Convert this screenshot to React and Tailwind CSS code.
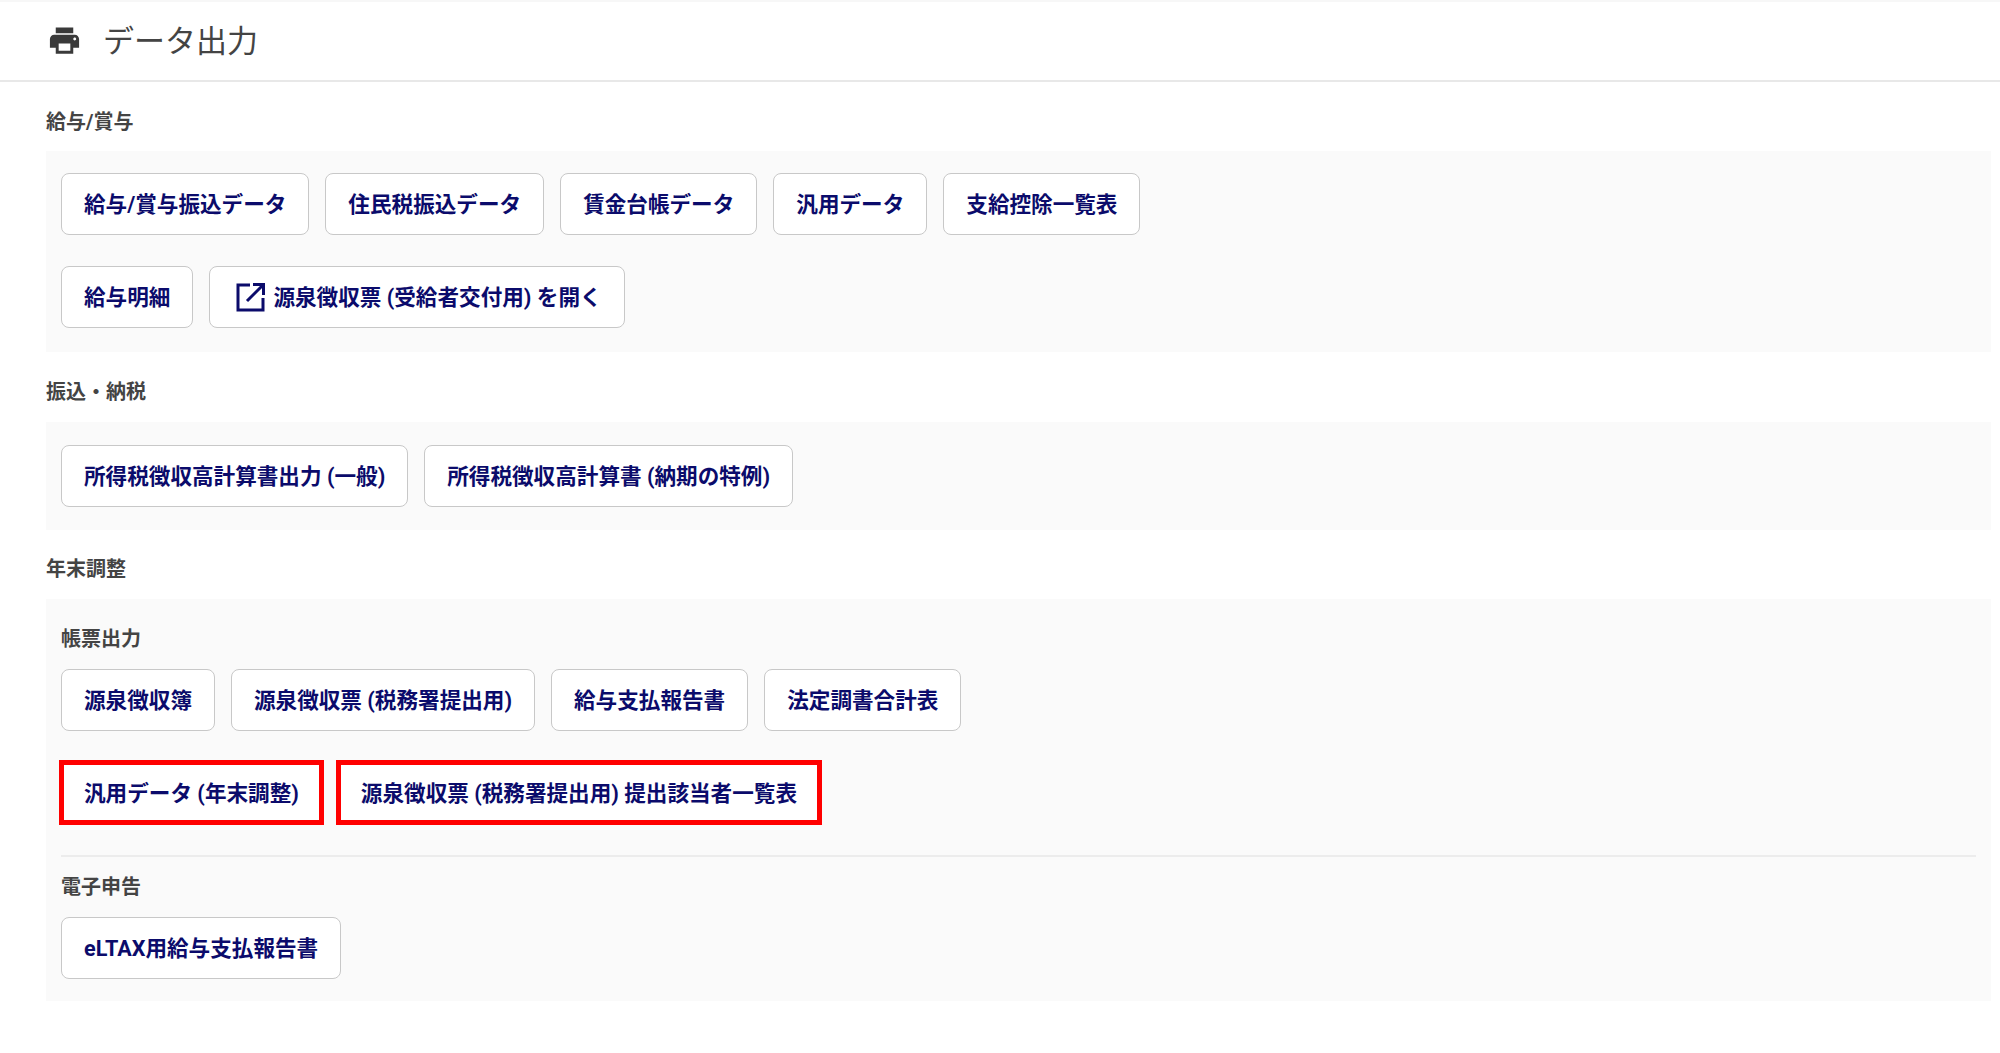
const font = { fontFamily: 'Roboto, "Noto Sans CJK JP", "Noto Sans", sans-serif' };

function Btn({ children, icon, red }) {
  return (
    <div className={red
      ? "h-[65px] -mt-[2px] -mx-[2px] px-[20px] pt-[2px] flex items-center bg-white border-[5px] border-[#ff0000] text-[21.6px] font-bold text-[#0b0b6b] whitespace-nowrap"
      : "h-[62px] px-[22px] flex items-center gap-[6px] bg-white border border-[#c8c8c8] rounded-[8px] text-[21.6px] font-bold text-[#0b0b6b] whitespace-nowrap"}>
      {icon && (
        <svg className="ml-[3px]" width="32" height="32" viewBox="0 0 32 32" fill="none" stroke="#0b0b6b" strokeWidth="3">
          <path d="M15 4H3v25h25V17" />
          <path d="M12 20L27 5M18 3.500h10.500V14" />
        </svg>
      )}
      <span className="pt-[2px]">{children}</span>
    </div>
  );
}

function Label({ children, className }) {
  return <div className={"text-[20px] leading-[28px] font-bold text-[#444444] " + className}>{children}</div>;
}

export default function App() {
  return (
    <div style={font} className="w-[2000px] h-[1053px] bg-white overflow-hidden">
      <div className="h-[82px] pb-[2px] border-b-2 border-[#e8e8e8] border-t-2 border-t-[#f7f7f7] flex items-center pl-[47px]">
        <svg width="35" height="35" viewBox="0 0 24 24" fill="#3a3a3a">
          <path d="M19 8H5c-1.660 0-3 1.340-3 3v6h4v4h12v-4h4v-6c0-1.660-1.340-3-3-3zm-3 11H8v-5h8v5zm3-7c-.550 0-1-.450-1-1s.450-1 1-1 1 .450 1 1-.450 1-1 1zm-1-9H6v4h12V3z" />
        </svg>
        <div className="ml-[21px] pt-[4px] text-[31px] text-[#444444]">データ出力</div>
      </div>

      <div className="pl-[46px] pr-[9px]">
        <Label className="mt-[26px] mb-[15px]">給与/賞与</Label>
        <div className="bg-[#fafafa] h-[201px] px-[15px] pt-[22px] flex flex-col gap-[31px]">
          <div className="flex gap-[16px]">
            <Btn>給与/賞与振込データ</Btn>
            <Btn>住民税振込データ</Btn>
            <Btn>賃金台帳データ</Btn>
            <Btn>汎用データ</Btn>
            <Btn>支給控除一覧表</Btn>
          </div>
          <div className="flex gap-[16px]">
            <Btn>給与明細</Btn>
            <Btn icon>源泉徴収票 (受給者交付用) を開く</Btn>
          </div>
        </div>

        <Label className="mt-[26px] mb-[16px]">振込・納税</Label>
        <div className="bg-[#fafafa] h-[108px] px-[15px] pt-[23px] flex gap-[16px]">
          <Btn>所得税徴収高計算書出力 (一般)</Btn>
          <Btn>所得税徴収高計算書 (納期の特例)</Btn>
        </div>

        <Label className="mt-[25px] mb-[16px]">年末調整</Label>
        <div className="bg-[#fafafa] h-[402px] px-[15px] pt-[26px]">
          <Label className="mb-[16px]">帳票出力</Label>
          <div className="flex flex-col gap-[31px]">
            <div className="flex gap-[16px]">
              <Btn>源泉徴収簿</Btn>
              <Btn>源泉徴収票 (税務署提出用)</Btn>
              <Btn>給与支払報告書</Btn>
              <Btn>法定調書合計表</Btn>
            </div>
            <div className="flex gap-[16px]">
              <Btn red>汎用データ (年末調整)</Btn>
              <Btn red>源泉徴収票 (税務署提出用) 提出該当者一覧表</Btn>
            </div>
          </div>
          <div className="border-t-2 border-[#ececec] mt-[30px] mb-[16px]" />
          <Label className="mb-[16px]">電子申告</Label>
          <div className="flex">
            <Btn>eLTAX用給与支払報告書</Btn>
          </div>
        </div>
      </div>
    </div>
  );
}
